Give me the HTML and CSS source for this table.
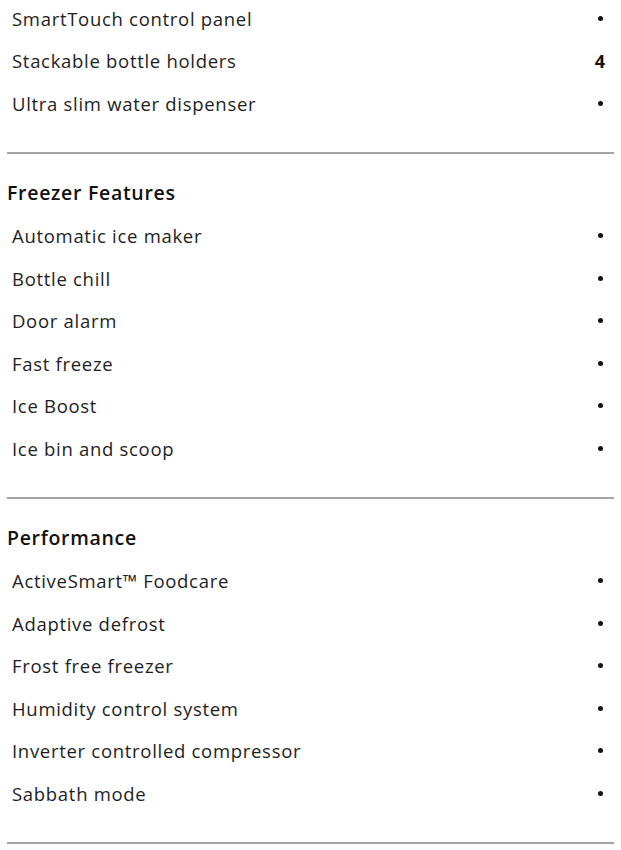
FILE: index.html
```html
<!DOCTYPE html>
<html>
<head>
<meta charset="utf-8">
<link rel="stylesheet" href="styles.css">
</head>
<body>
<div class="page">
  <section class="group group-first">
    <ul class="list">
      <li class="row"><span class="label">SmartTouch control panel</span><span class="dot"></span></li>
      <li class="row"><span class="label">Stackable bottle holders</span><span class="value">4</span></li>
      <li class="row"><span class="label">Ultra slim water dispenser</span><span class="dot"></span></li>
    </ul>
  </section>
  <section class="group">
    <h2 class="title">Freezer Features</h2>
    <ul class="list">
      <li class="row"><span class="label">Automatic ice maker</span><span class="dot"></span></li>
      <li class="row"><span class="label">Bottle chill</span><span class="dot"></span></li>
      <li class="row"><span class="label">Door alarm</span><span class="dot"></span></li>
      <li class="row"><span class="label">Fast freeze</span><span class="dot"></span></li>
      <li class="row"><span class="label">Ice Boost</span><span class="dot"></span></li>
      <li class="row"><span class="label">Ice bin and scoop</span><span class="dot"></span></li>
    </ul>
  </section>
  <section class="group">
    <h2 class="title">Performance</h2>
    <ul class="list">
      <li class="row"><span class="label">ActiveSmart™ Foodcare</span><span class="dot"></span></li>
      <li class="row"><span class="label">Adaptive defrost</span><span class="dot"></span></li>
      <li class="row"><span class="label">Frost free freezer</span><span class="dot"></span></li>
      <li class="row"><span class="label">Humidity control system</span><span class="dot"></span></li>
      <li class="row"><span class="label">Inverter controlled compressor</span><span class="dot"></span></li>
      <li class="row"><span class="label">Sabbath mode</span><span class="dot"></span></li>
    </ul>
  </section>
</div>
</body>
</html>
```
FILE: styles.css
```css
html, body {
  margin: 0;
  padding: 0;
  background: #ffffff;
}
body {
  font-family: "Open Sans", "Liberation Sans", sans-serif;
  color: #1a1a1a;
}
.page {
  padding: 0 7px 0 7px;
  width: 607px;
}
.group {
  border-bottom: 2px solid #a3a3a3;
  padding-bottom: 27px;
}
.group-first {
  margin-top: -3px;
}
.title {
  margin: 0;
  padding-top: 26px;
  height: 26px;
  line-height: 26px;
  font-size: 19.5px;
  font-weight: 600;
  letter-spacing: 0.7px;
  color: #111;
}
.group .title + .list {
  margin-top: 9px;
}
.list {
  list-style: none;
  margin: 0;
  padding: 0;
}
.row {
  height: 42.5px;
  display: flex;
  align-items: center;
  justify-content: space-between;
  padding-left: 5px;
  padding-right: 11px;
}
.label {
  font-size: 18.5px;
  letter-spacing: 0.7px;
  color: #1e1e1e;
}
.value {
  font-size: 18px;
  font-weight: 700;
  color: #111;
  margin-right: -2px;
}
.dot {
  width: 5px;
  height: 5px;
  border-radius: 50%;
  background: #111;
}
```
